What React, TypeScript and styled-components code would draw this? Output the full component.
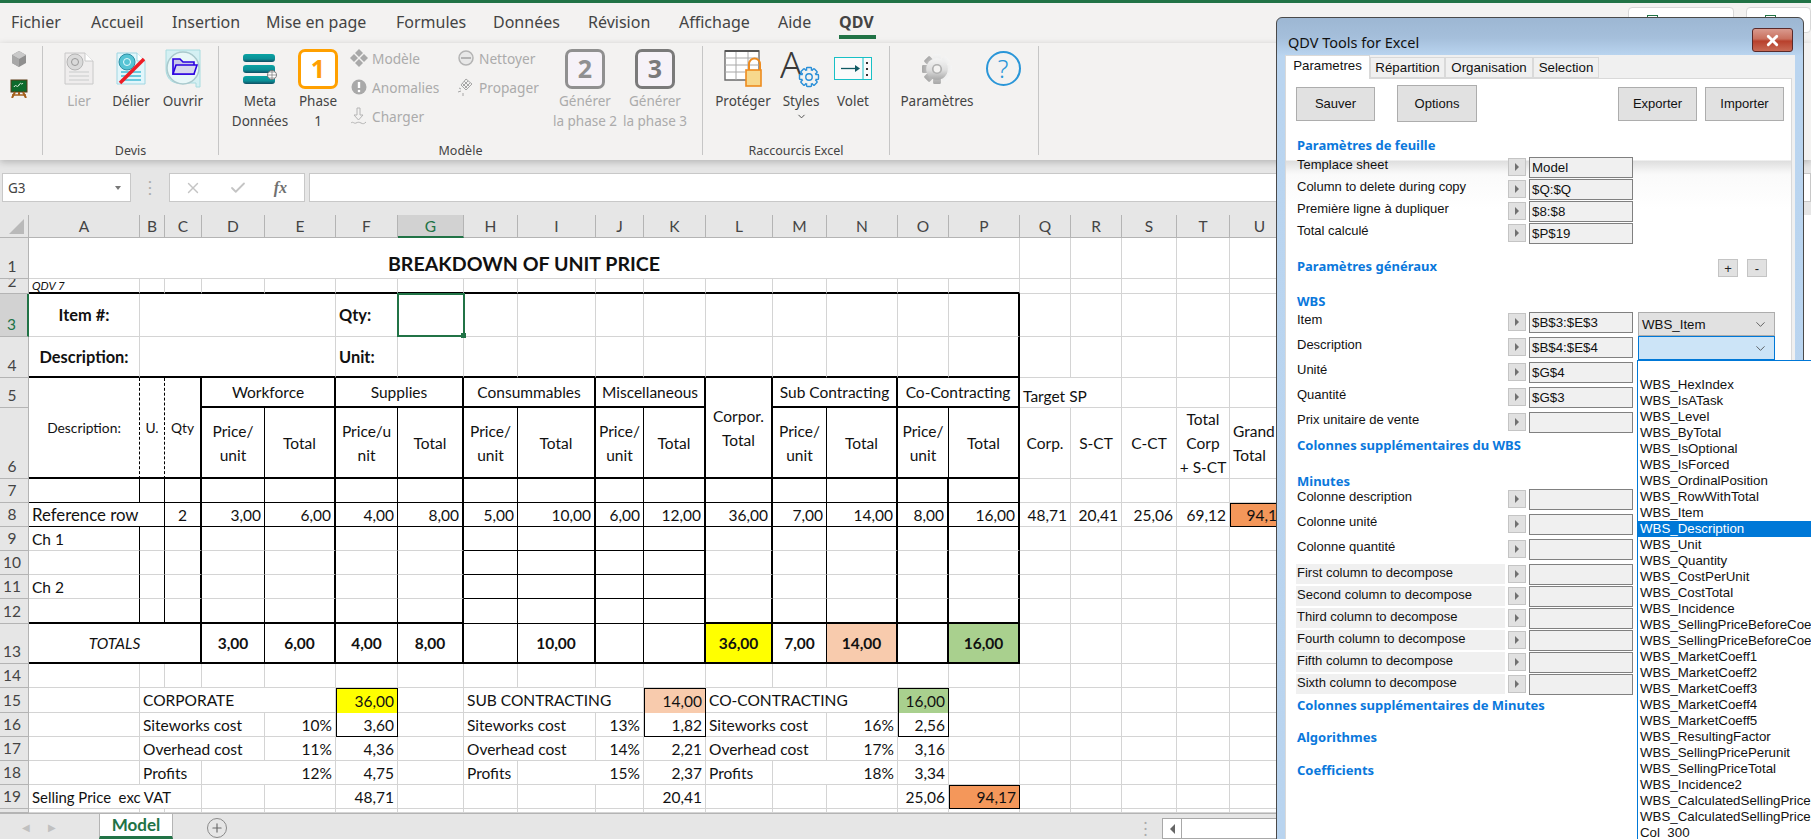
import React from "react";
import styled, { createGlobalStyle } from "styled-components";
import { Check, ChevronDown, Plus, X } from "lucide-react";

const UI_FONT = `"Noto Sans", "Open Sans", sans-serif`;
const CELL_FONT = `Lato, "Open Sans", sans-serif`;
const FORM_FONT = `"Liberation Sans", Arial, sans-serif`;

const GlobalStyle = createGlobalStyle`
  html, body { margin: 0; padding: 0; background: #fff; overflow: hidden; }
  * { box-sizing: border-box; }
`;

/* ---------- sheet data ---------- */
type Line = "g" | "n" | "T" | "d" | "x";
type CellDef = {
  c: number;
  r: number;
  cs?: number;
  rs?: number;
  text?: string;
  align?: "left" | "center" | "right";
  bold?: boolean;
  italic?: boolean;
  size?: number;
  bg?: string;
  right?: Line;
  bottom?: Line;
  left?: Line;
  top?: Line;
  drop?: number;
};

const COLUMNS: [string, number][] = [
  ["A", 111], ["B", 25], ["C", 37], ["D", 63], ["E", 71], ["F", 62], ["G", 66],
  ["H", 54], ["I", 78], ["J", 48], ["K", 62], ["L", 67], ["M", 54], ["N", 71],
  ["O", 51], ["P", 71], ["Q", 51], ["R", 51], ["S", 55], ["T", 53], ["U", 60],
];
const ROWS = [41, 15, 43, 41, 30, 71, 24, 24, 24, 24, 24, 25, 40, 24, 25, 24, 24, 24, 24, 4];

const YELLOW = "#ffff00";
const PEACH = "#f8cbad";
const GREEN = "#a9d08e";
const ORANGE = "#f4975a";

const colRight: Line[] = ["n", "n", "T", "n", "T", "n", "T", "n", "T", "n", "T", "T", "n", "T", "T", "T"];

const cells: CellDef[] = [
  { c: 1, r: 1, cs: 16, text: "BREAKDOWN OF UNIT PRICE", align: "center", bold: true, size: 19.6, drop: 11 },
  { c: 1, r: 2, text: "QDV 7", italic: true, size: 11.5, bottom: "T" },
  ...Array.from({ length: 15 }, (_, i): CellDef => ({ c: i + 2, r: 2, bottom: "T" })),

  { c: 1, r: 3, text: "Item #:", align: "center", bold: true, size: 16.4 },
  { c: 2, r: 3, cs: 4 },
  { c: 6, r: 3, text: "Qty:", bold: true, size: 16.4 },
  { c: 16, r: 3, right: "T" },
  { c: 1, r: 4, text: "Description:", align: "center", bold: true, size: 16.4, bottom: "T" },
  { c: 2, r: 4, cs: 4, bottom: "T" },
  { c: 6, r: 4, text: "Unit:", bold: true, size: 16.4, bottom: "T" },
  ...Array.from({ length: 9 }, (_, i): CellDef => ({ c: i + 7, r: 4, bottom: "T" })),
  { c: 16, r: 4, right: "T", bottom: "T" },

  { c: 1, r: 5, rs: 2, text: "Description:", align: "center", size: 13.8, right: "d", bottom: "T" },
  { c: 2, r: 5, rs: 2, text: "U.", align: "center", size: 13.8, right: "d", bottom: "T" },
  { c: 3, r: 5, rs: 2, text: "Qty", align: "center", size: 13.8, right: "T", bottom: "T" },
  { c: 4, r: 5, cs: 2, text: "Workforce", align: "center", right: "T", bottom: "T" },
  { c: 6, r: 5, cs: 2, text: "Supplies", align: "center", right: "T", bottom: "T" },
  { c: 8, r: 5, cs: 2, text: "Consummables", align: "center", right: "T", bottom: "T" },
  { c: 10, r: 5, cs: 2, text: "Miscellaneous", align: "center", right: "T", bottom: "T" },
  { c: 12, r: 5, rs: 2, text: "Corpor.\nTotal", align: "center", right: "T", bottom: "T" },
  { c: 13, r: 5, cs: 2, text: "Sub Contracting", align: "center", right: "T", bottom: "T" },
  { c: 15, r: 5, cs: 2, text: "Co-Contracting", align: "center", right: "T", bottom: "T" },
  { c: 17, r: 5, cs: 2, text: "Target SP", drop: 6 },

  { c: 4, r: 6, text: "Price/\nunit", align: "center", right: "n", bottom: "T" },
  { c: 5, r: 6, text: "Total", align: "center", right: "T", bottom: "T" },
  { c: 6, r: 6, text: "Price/u\nnit", align: "center", right: "n", bottom: "T" },
  { c: 7, r: 6, text: "Total", align: "center", right: "T", bottom: "T" },
  { c: 8, r: 6, text: "Price/\nunit", align: "center", right: "n", bottom: "T" },
  { c: 9, r: 6, text: "Total", align: "center", right: "T", bottom: "T" },
  { c: 10, r: 6, text: "Price/\nunit", align: "center", right: "n", bottom: "T" },
  { c: 11, r: 6, text: "Total", align: "center", right: "T", bottom: "T" },
  { c: 13, r: 6, text: "Price/\nunit", align: "center", right: "n", bottom: "T" },
  { c: 14, r: 6, text: "Total", align: "center", right: "T", bottom: "T" },
  { c: 15, r: 6, text: "Price/\nunit", align: "center", right: "n", bottom: "T" },
  { c: 16, r: 6, text: "Total", align: "center", right: "T", bottom: "T" },
  { c: 17, r: 6, text: "Corp.", align: "center" },
  { c: 18, r: 6, text: "S-CT", align: "center" },
  { c: 19, r: 6, text: "C-CT", align: "center" },
  { c: 20, r: 6, text: "Total\nCorp\n+ S-CT", align: "center" },
  { c: 21, r: 6, text: "Grand\nTotal" },

  ...colRight.map((right, i): CellDef => ({ c: i + 1, r: 7, right, bottom: "n" })),

  { c: 1, r: 8, cs: 2, text: "Reference row", size: 16.8, right: "n", bottom: "n" },
  { c: 3, r: 8, text: "2", align: "center", right: "T", bottom: "n" },
  ...["3,00", "6,00", "4,00", "8,00", "5,00", "10,00", "6,00", "12,00", "36,00", "7,00", "14,00", "8,00", "16,00"].map(
    (text, i): CellDef => ({ c: i + 4, r: 8, text, align: "right", right: colRight[i + 3], bottom: "n" })
  ),
  { c: 17, r: 8, text: "48,71", align: "right" },
  { c: 18, r: 8, text: "20,41", align: "right" },
  { c: 19, r: 8, text: "25,06", align: "right" },
  { c: 20, r: 8, text: "69,12", align: "right" },
  { c: 21, r: 8, text: "94,17", align: "right", bg: ORANGE, top: "n", left: "n", right: "n", bottom: "n" },

  ...[9, 10, 11, 12].flatMap((r) =>
    colRight.map((right, i): CellDef => ({
      c: i + 1,
      r,
      right,
      text: i === 0 && r === 9 ? "Ch 1" : i === 0 && r === 11 ? "Ch 2" : undefined,
      bottom: i >= 7 && i <= 10 ? "n" : r === 12 ? "T" : "g",
    }))
  ),

  { c: 1, r: 13, cs: 3, text: "TOTALS", align: "center", italic: true, right: "T", bottom: "T" },
  ...[
    ["3,00"], ["6,00"], ["4,00"], ["8,00"], [""], ["10,00"], [""], [""],
    ["36,00", YELLOW], ["7,00"], ["14,00", PEACH], [""], ["16,00", GREEN],
  ].map(([text, bg], i): CellDef => ({
    c: i + 4, r: 13, text, bg, bold: true, align: "center", right: colRight[i + 3], bottom: "T",
  })),

  { c: 2, r: 15, cs: 4, text: "CORPORATE" },
  { c: 6, r: 15, text: "36,00", align: "right", bg: YELLOW, top: "n", left: "n", right: "n", bottom: "x" },
  { c: 8, r: 15, cs: 3, text: "SUB CONTRACTING" },
  { c: 11, r: 15, text: "14,00", align: "right", bg: PEACH, top: "n", left: "n", right: "n", bottom: "x" },
  { c: 12, r: 15, cs: 3, text: "CO-CONTRACTING" },
  { c: 15, r: 15, text: "16,00", align: "right", bg: GREEN, top: "n", left: "n", right: "n", bottom: "x" },

  { c: 2, r: 16, cs: 3, text: "Siteworks cost" },
  { c: 5, r: 16, text: "10%", align: "right" },
  { c: 6, r: 16, text: "3,60", align: "right", left: "n", right: "n", bottom: "n" },
  { c: 8, r: 16, cs: 2, text: "Siteworks cost" },
  { c: 10, r: 16, text: "13%", align: "right" },
  { c: 11, r: 16, text: "1,82", align: "right", left: "n", right: "n", bottom: "n" },
  { c: 12, r: 16, cs: 2, text: "Siteworks cost" },
  { c: 14, r: 16, text: "16%", align: "right" },
  { c: 15, r: 16, text: "2,56", align: "right", left: "n", right: "n", bottom: "n" },

  { c: 2, r: 17, cs: 3, text: "Overhead cost" },
  { c: 5, r: 17, text: "11%", align: "right" },
  { c: 6, r: 17, text: "4,36", align: "right" },
  { c: 8, r: 17, cs: 2, text: "Overhead cost" },
  { c: 10, r: 17, text: "14%", align: "right" },
  { c: 11, r: 17, text: "2,21", align: "right" },
  { c: 12, r: 17, cs: 2, text: "Overhead cost" },
  { c: 14, r: 17, text: "17%", align: "right" },
  { c: 15, r: 17, text: "3,16", align: "right" },

  { c: 2, r: 18, cs: 2, text: "Profits" },
  { c: 4, r: 18, cs: 2, text: "12%", align: "right" },
  { c: 6, r: 18, text: "4,75", align: "right" },
  { c: 8, r: 18, text: "Profits" },
  { c: 9, r: 18, cs: 2, text: "15%", align: "right" },
  { c: 11, r: 18, text: "2,37", align: "right" },
  { c: 12, r: 18, text: "Profits" },
  { c: 13, r: 18, cs: 2, text: "18%", align: "right" },
  { c: 15, r: 18, text: "3,34", align: "right" },

  { c: 1, r: 19, cs: 3, text: "Selling Price  exc VAT", size: 14.9 },
  { c: 6, r: 19, text: "48,71", align: "right" },
  { c: 11, r: 19, text: "20,41", align: "right" },
  { c: 15, r: 19, text: "25,06", align: "right" },
  { c: 16, r: 19, text: "94,17", align: "right", bg: ORANGE, top: "n", left: "n", right: "n", bottom: "n" },
];

const taken = new Set<string>();
cells.forEach((d) => {
  for (let y = 0; y < (d.rs ?? 1); y++)
    for (let x = 0; x < (d.cs ?? 1); x++) taken.add(`${d.c + x}:${d.r + y}`);
});
const blanks: CellDef[] = [];
ROWS.forEach((_, y) =>
  COLUMNS.forEach((__, x) => {
    if (!taken.has(`${x + 1}:${y + 1}`)) blanks.push({ c: x + 1, r: y + 1 });
  })
);

const lineCss = (k?: Line) => {
  if (k === "T") return "2px solid #000";
  if (k === "n") return "1px solid #000";
  if (k === "d") return "1px dashed #000";
  if (k === "x") return "0 none";
  return "1px solid #d4d4d4";
};

/* ---------- page ---------- */
const Page = styled.div`
  position: relative;
  width: 1811px;
  height: 839px;
  overflow: hidden;
  display: flex;
  flex-direction: column;
  background: #e6e6e6;
`;

const TopStripe = styled.div`
  height: 3px;
  flex: none;
  background: #217346;
`;

const TabRow = styled.div`
  height: 40px;
  flex: none;
  display: flex;
  padding-left: 11px;
  background: #f3f2f1;
  font-family: ${UI_FONT};
`;

const MenuTab = styled.div<{ $w: number; $active?: boolean }>`
  position: relative;
  flex: 0 0 ${(p) => p.$w}px;
  padding-top: 6px;
  height: 36px;
  font-size: 16px;
  line-height: 26px;
  font-weight: ${(p) => (p.$active ? 700 : 400)};
  color: #444;
  ${(p) =>
    p.$active &&
    `&::after { content: ""; position: absolute; left: 0; width: 37px; top: 32px; height: 4px; background: #217346; }`}
`;

const ShareGroup = styled.div`
  margin-left: auto;
  display: flex;
  gap: 12px;
`;

const ShareBox = styled.div<{ $w: number }>`
  width: ${(p) => p.$w}px;
  height: 26px;
  margin-top: 4px;
  padding: 7px 0 0 18px;
  background: #fff;
  border: 1px solid #d8d8d8;
  border-radius: 4px;
`;

const ShareMark = styled.div`
  width: 11px;
  height: 11px;
  border: 1px solid #217346;
`;

const Ribbon = styled.div`
  position: relative;
  z-index: 2;
  height: 117px;
  flex: none;
  display: flex;
  padding: 3px 0 5px;
  background: #f3f2f1;
  box-shadow: 0 2px 7px rgba(0, 0, 0, 0.22);
  font-family: ${UI_FONT};
`;

const Group = styled.div<{ $w: number }>`
  width: ${(p) => p.$w}px;
  flex: none;
  display: flex;
  flex-direction: column;
  border-right: 1px solid #c6c6c6;
`;

const GroupBody = styled.div<{ $pad?: number }>`
  flex: 1;
  display: flex;
  padding-left: ${(p) => p.$pad ?? 0}px;
`;

const GroupLabel = styled.div`
  height: 12px;
  text-align: center;
  font-size: 12.5px;
  line-height: 16px;
  color: #444;
`;

const QuickColumn = styled.div`
  display: flex;
  flex-direction: column;
  gap: 11px;
  padding: 4px 0 0 10px;
`;

const LargeButton = styled.div<{ $w: number; $off?: boolean }>`
  width: ${(p) => p.$w}px;
  flex: none;
  display: flex;
  flex-direction: column;
  align-items: center;
  text-align: center;
  font-size: 13.5px;
  line-height: 20px;
  white-space: pre-line;
  color: ${(p) => (p.$off ? "#ababab" : "#444")};
`;

const IconSlot = styled.div`
  height: 45px;
  display: flex;
  align-items: center;
  justify-content: center;
`;

const PhaseBox = styled.div<{ $c: string; $bg: string }>`
  width: 40px;
  height: 40px;
  border: 3px solid ${(p) => p.$c};
  border-radius: 7px;
  background: ${(p) => p.$bg};
  color: ${(p) => p.$c};
  font-size: 25px;
  font-weight: 700;
  line-height: 33px;
  text-align: center;
`;

const SmallColumn = styled.div<{ $w: number; $pad?: number }>`
  width: ${(p) => p.$w}px;
  flex: none;
  display: flex;
  flex-direction: column;
  gap: 9px;
  padding: 2px 0 0 ${(p) => p.$pad ?? 0}px;
`;

const SmallButton = styled.div`
  height: 20px;
  display: flex;
  align-items: center;
  gap: 4px;
  font-size: 13.7px;
  color: #ababab;
  white-space: nowrap;
`;

const HelpCircle = styled.div`
  width: 35px;
  height: 35px;
  border: 2px solid #2a96d8;
  border-radius: 50%;
  color: #2a96d8;
  font-size: 25px;
  line-height: 30px;
  text-align: center;
  font-weight: 300;
`;

const FormulaBar = styled.div`
  height: 55px;
  flex: none;
  display: flex;
  align-items: flex-start;
  padding: 13px 0 0 2px;
  background: #e6e6e6;
  font-family: ${UI_FONT};
`;

const NameBox = styled.div`
  width: 129px;
  height: 29px;
  display: flex;
  align-items: center;
  justify-content: space-between;
  padding: 0 9px 0 5px;
  background: #fff;
  border: 1px solid #c8c8c8;
  font-size: 13.5px;
  color: #444;
`;

const Caret = styled.div`
  width: 0;
  height: 0;
  border-left: 3.5px solid transparent;
  border-right: 3.5px solid transparent;
  border-top: 4px solid #777;
`;

const GripDots = styled.div`
  width: 38px;
  height: 29px;
  display: flex;
  align-items: center;
  justify-content: center;
  color: #aaa;
  font-size: 12px;
  font-weight: 700;
  line-height: 6px;
  text-align: center;
  white-space: pre-line;
`;

const FunctionBox = styled.div`
  width: 136px;
  height: 29px;
  display: flex;
  align-items: center;
  justify-content: space-between;
  padding: 0 17px 0 14px;
  background: #fff;
  border: 1px solid #c8c8c8;
  color: #c4c4c4;
`;

const FxMark = styled.span`
  font-family: "Liberation Serif", serif;
  font-style: italic;
  font-weight: 700;
  font-size: 16px;
  color: #707070;
`;

const FormulaInput = styled.div`
  flex: 1;
  height: 29px;
  margin-left: 4px;
  background: #fff;
  border: 1px solid #c8c8c8;
`;

const Sheet = styled.div`
  flex: none;
  height: 598px;
  display: grid;
  grid-template-columns: 29px ${COLUMNS.map(([, w]) => `${w}px`).join(" ")};
  grid-template-rows: 23px ${ROWS.map((h) => `${h}px`).join(" ")};
  background: #fff;
  font-family: ${CELL_FONT};
  font-size: 15.5px;
  color: #111;
  overflow: hidden;
`;

const Corner = styled.div`
  position: relative;
  background: #e6e6e6;
  border-right: 1px solid #b4b4b4;
  border-bottom: 1px solid #b4b4b4;
  &::after {
    content: "";
    position: absolute;
    right: 4px;
    bottom: 3px;
    border-left: 15px solid transparent;
    border-bottom: 15px solid #b9b9b9;
  }
`;

const ColHead = styled.div<{ $on?: boolean }>`
  display: flex;
  align-items: center;
  justify-content: center;
  background: ${(p) => (p.$on ? "#d2d2d2" : "#e6e6e6")};
  border-right: 1px solid #b4b4b4;
  border-bottom: ${(p) => (p.$on ? "2px solid #217346" : "1px solid #b4b4b4")};
  color: ${(p) => (p.$on ? "#217346" : "#444")};
`;

const RowHead = styled.div<{ $r: number; $on?: boolean }>`
  grid-column: 1;
  grid-row: ${(p) => p.$r + 1};
  display: flex;
  align-items: flex-end;
  justify-content: center;
  padding: 0 4px 2px 0;
  overflow: hidden;
  line-height: 20px;
  background: ${(p) => (p.$on ? "#d2d2d2" : "#e6e6e6")};
  border-right: ${(p) => (p.$on ? "2px solid #217346" : "1px solid #b4b4b4")};
  border-bottom: 1px solid #b4b4b4;
  color: ${(p) => (p.$on ? "#217346" : "#444")};
`;

const Cell = styled.div<{
  $c: number;
  $r: number;
  $cs: number;
  $rs: number;
  $align: string;
  $bold?: boolean;
  $italic?: boolean;
  $size?: number;
  $bg?: string;
  $right?: Line;
  $bottom?: Line;
  $left?: Line;
  $top?: Line;
  $drop?: number;
}>`
  grid-column: ${(p) => p.$c + 1} / span ${(p) => p.$cs};
  grid-row: ${(p) => p.$r + 1} / span ${(p) => p.$rs};
  min-width: 0;
  min-height: 0;
  display: flex;
  align-items: center;
  justify-content: ${(p) =>
    p.$align === "center" ? "center" : p.$align === "right" ? "flex-end" : "flex-start"};
  padding: ${(p) => p.$drop ?? 0}px 3px 0;
  overflow: hidden;
  white-space: pre;
  text-align: ${(p) => p.$align};
  line-height: 24px;
  font-weight: ${(p) => (p.$bold ? 700 : 400)};
  font-style: ${(p) => (p.$italic ? "italic" : "normal")};
  font-size: ${(p) => p.$size ?? 15.5}px;
  background: ${(p) => p.$bg ?? "transparent"};
  border-right: ${(p) => lineCss(p.$right)};
  border-bottom: ${(p) => lineCss(p.$bottom)};
  ${(p) => p.$left && `border-left: ${lineCss(p.$left)};`}
  ${(p) => p.$top && `border-top: ${lineCss(p.$top)};`}
`;

const ActiveCell = styled.div`
  grid-column: 8;
  grid-row: 4;
  position: relative;
  margin: -1px -1px 0 -1px;
  border: 2px solid #217346;
  z-index: 1;
  &::after {
    content: "";
    position: absolute;
    right: -3px;
    bottom: -3px;
    width: 5px;
    height: 5px;
    background: #217346;
  }
`;

const SheetBar = styled.div`
  flex: 1;
  display: flex;
  align-items: stretch;
  background: #e6e6e6;
  border-top: 1px solid #b4b4b4;
  font-family: ${CELL_FONT};
`;

const NavArrows = styled.div`
  width: 99px;
  display: flex;
  gap: 18px;
  align-items: center;
  padding: 0 0 0 22px;
  color: #c0c0c0;
  font-size: 10px;
`;

const SheetTab = styled.div`
  width: 74px;
  background: #fff;
  border: 1px solid #b4b4b4;
  border-top: 0;
  border-bottom: 3px solid #217346;
  color: #217346;
  font-weight: 700;
  font-size: 17px;
  line-height: 22px;
  text-align: center;
`;

const AddSheet = styled.div`
  width: 20px;
  height: 20px;
  margin: 4px 0 0 34px;
  display: flex;
  align-items: center;
  justify-content: center;
  border: 1.5px solid #8a8a8a;
  border-radius: 50%;
  color: #6a6a6a;
`;

const ScrollGrip = styled.div`
  margin: 5px 0 0 auto;
  width: 4px;
  color: #aaa;
  font-size: 11px;
  font-weight: 700;
  line-height: 6px;
  white-space: pre-line;
`;

const ScrollTrack = styled.div`
  width: 649px;
  height: 21px;
  margin: 4px 0 0 14px;
  display: flex;
  background: #fff;
  border: 1px solid #a8a8a8;
`;

const ScrollArrow = styled.div`
  width: 19px;
  border-right: 1px solid #a8a8a8;
  display: flex;
  align-items: center;
  justify-content: center;
  &::before {
    content: "";
    border-top: 5px solid transparent;
    border-bottom: 5px solid transparent;
    border-right: 5px solid #666;
  }
`;

/* ---------- dialog ---------- */
const Dialog = styled.div`
  position: absolute;
  z-index: 5;
  left: 1276px;
  top: 17px;
  width: 528px;
  height: 840px;
  display: flex;
  flex-direction: column;
  padding: 0 8px 0 8px;
  border: 1px solid #4a4a4a;
  border-radius: 6px 6px 0 0;
  background: linear-gradient(#9db7d3 0, #a5bfdb 20px, #bad5f0 38px, #b9d4ef 100%);
  font-family: ${FORM_FONT};
  color: #111;
`;

const TitleBar = styled.div`
  height: 37px;
  flex: none;
  display: flex;
  align-items: flex-start;
  justify-content: space-between;
  padding: 14px 2px 0 3px;
  font-family: ${UI_FONT};
  font-size: 14.5px;
  line-height: 20px;
`;

const CloseButton = styled.div`
  width: 41px;
  height: 24px;
  margin-top: -4px;
  display: flex;
  align-items: center;
  justify-content: center;
  border: 1px solid #5a2a2a;
  border-radius: 3px;
  background: linear-gradient(#d99a8e 0, #c9705e 45%, #b8402c 55%, #c86a55 100%);
  color: #fff;
`;

const ClientArea = styled.div`
  flex: 1;
  display: flex;
  flex-direction: column;
  background: #f0f0f0;
  padding-right: 3px;
`;

const TabStrip = styled.div`
  height: 23px;
  flex: none;
  display: flex;
  align-items: flex-end;
  font-size: 13.3px;
`;

const DialogTab = styled.div<{ $w: number; $active?: boolean }>`
  position: relative;
  width: ${(p) => p.$w}px;
  height: ${(p) => (p.$active ? 24 : 21)}px;
  margin-bottom: ${(p) => (p.$active ? -1 : 0)}px;
  z-index: ${(p) => (p.$active ? 1 : 0)};
  background: ${(p) => (p.$active ? "#fff" : "#f0f0f0")};
  border: 1px solid #d9d9d9;
  border-bottom: ${(p) => (p.$active ? "0" : "1px solid #d9d9d9")};
  line-height: 20px;
  text-align: center;
`;

const TabBody = styled.div`
  flex: 1;
  display: flex;
  flex-direction: column;
  padding: 6px 0 0 10px;
  border: 1px solid #d9d9d9;
  background: linear-gradient(
    #fff 0,
    #fff 81px,
    #dedede 82px,
    #f4f4f4 92px,
    #fafafa 96px,
    #fff 130px
  );
  font-size: 13px;
`;

const ButtonBar = styled.div`
  height: 37px;
  flex: none;
  display: flex;
  align-items: center;
  padding-right: 7px;
`;

const DialogButton = styled.div<{ $w: number; $h: number; $gap?: number; $push?: boolean }>`
  width: ${(p) => p.$w}px;
  height: ${(p) => p.$h}px;
  margin-left: ${(p) => (p.$push ? "auto" : `${p.$gap ?? 0}px`)};
  display: flex;
  align-items: center;
  justify-content: center;
  background: #e1e1e1;
  border: 1px solid #adadad;
`;

const Section = styled.div<{ $mt: number }>`
  position: relative;
  height: 18px;
  flex: none;
  margin-top: ${(p) => p.$mt}px;
  display: flex;
  align-items: center;
  padding-left: 1px;
  font-family: ${UI_FONT};
  font-size: 13px;
  font-weight: 700;
  color: #0a78dc;
  white-space: nowrap;
`;

const MiniButton = styled.div<{ $left: number }>`
  position: absolute;
  left: ${(p) => p.$left}px;
  top: 2px;
  width: 20px;
  height: 18px;
  display: flex;
  align-items: center;
  justify-content: center;
  background: #e1e1e1;
  border: 1px solid #c4c4c4;
  color: #222;
  font-family: ${FORM_FONT};
  font-size: 13px;
  font-weight: 400;
`;

const Fields = styled.div<{ $mt: number; $gap: number }>`
  flex: none;
  margin-top: ${(p) => p.$mt}px;
  display: flex;
  flex-direction: column;
  gap: ${(p) => p.$gap}px;
`;

const FieldRow = styled.div`
  height: 21px;
  display: flex;
  align-items: flex-start;
`;

const FieldLabel = styled.div<{ $shaded?: boolean }>`
  width: 209px;
  height: 20px;
  margin-right: 3px;
  padding-left: 1px;
  line-height: ${(p) => (p.$shaded ? 17 : 16)}px;
  white-space: nowrap;
  background: ${(p) => (p.$shaded ? "#f0f0f0" : "transparent")};
`;

const ArrowButton = styled.div`
  width: 18px;
  height: 18px;
  margin: 1px 3px 0 0;
  flex: none;
  display: flex;
  align-items: center;
  justify-content: center;
  background: #e1e1e1;
  border: 1px solid #c4c4c4;
  &::before {
    content: "";
    border-top: 4px solid transparent;
    border-bottom: 4px solid transparent;
    border-left: 4px solid #707070;
  }
`;

const FieldValue = styled.div`
  width: 104px;
  height: 21px;
  flex: none;
  padding-left: 2px;
  border: 1px solid #808080;
  background: #f0f0f0;
  line-height: 20px;
  font-size: 13.3px;
`;

const SelectBox = styled.div<{ $focus?: boolean }>`
  width: 137px;
  height: 24px;
  margin-left: 5px;
  flex: none;
  display: flex;
  align-items: center;
  justify-content: space-between;
  padding: 0 6px 0 3px;
  background: ${(p) => (p.$focus ? "#cce4f7" : "#e1e1e1")};
  border: 1px solid ${(p) => (p.$focus ? "#0078d7" : "#adadad")};
  font-size: 13.3px;
  ${(p) => p.$focus && "margin-top: -1px;"}
`;

const Dropdown = styled.div`
  position: absolute;
  z-index: 6;
  left: 360px;
  top: 342px;
  width: 175px;
  height: 500px;
  overflow: hidden;
  background: #fff;
  border: 1px solid #0078d7;
  border-right: 0;
  font-size: 13.3px;
`;

const DropItem = styled.div<{ $on?: boolean }>`
  height: 16px;
  padding-left: 2px;
  line-height: 16px;
  white-space: nowrap;
  background: ${(p) => (p.$on ? "#0078d7" : "transparent")};
  color: ${(p) => (p.$on ? "#fff" : "#111")};
`;

/* ---------- icons ---------- */
const CubeIcon = () => (
  <svg width="18" height="18" viewBox="0 0 18 18">
    <path d="M9 1l7 4v8l-7 4-7-4V5z" fill="#8f8f8f" />
    <path d="M9 1l7 4-7 4-7-4z" fill="#c9c9c9" />
    <path d="M9 9v8l-7-4V5z" fill="#a8a8a8" />
  </svg>
);

const EaselIcon = () => (
  <svg width="18" height="19" viewBox="0 0 18 19">
    <rect x="1" y="1" width="16" height="12" fill="#0d6b2c" stroke="#5b3a16" />
    <path d="M4 8c2-4 3 2 5-2s2 1 4-2" stroke="#e8f5e8" fill="none" strokeWidth="1" />
    <path d="M5 13l-3 6M13 13l3 6M9 13v3" stroke="#a5601c" strokeWidth="2" />
    <path d="M2 16h14" stroke="#a5601c" strokeWidth="1.5" />
  </svg>
);

const DocIcon = ({ faded, strike }: { faded?: boolean; strike?: boolean }) => (
  <svg width="32" height="33" viewBox="0 0 32 33">
    <path d="M2 1h20l8 8v23H2z" fill={faded ? "#efeded" : "#e2f6fb"} stroke={faded ? "#c8c8c8" : "#9fd6e2"} />
    <path d="M22 1v8h8" fill="#fff" stroke={faded ? "#c8c8c8" : "#9fd6e2"} />
    <circle cx="12" cy="10" r="8" fill={faded ? "#dadada" : "#56c4d4"} stroke={faded ? "#b5b5b5" : "#2f8fa5"} />
    <circle cx="12" cy="10" r="3.5" fill="none" stroke={faded ? "#999" : "#e6fbff"} />
    {[20, 24, 28].map((y) => (
      <path key={y} d={`M6 ${y}h20`} stroke={faded ? "#d6d6d6" : "#45bcd6"} strokeWidth="1.5" />
    ))}
    {strike && <path d="M29 7L5 31" stroke="#ee1c25" strokeWidth="3.5" />}
  </svg>
);

const OpenIcon = () => (
  <svg width="38" height="39" viewBox="0 0 38 39">
    <path d="M2 1h34v37H32V34H14C7 34 2 28 2 20z" fill="#d4f0f3" stroke="#a8dce0" />
    <circle cx="19" cy="19" r="16" fill="#e8f7f8" stroke="#a9c9cd" strokeWidth="1.5" />
    <path d="M9 25V10h7l3 3h11v12z" fill="#c8c8e8" stroke="#2a00e0" strokeWidth="1.6" />
    <path d="M9 25l3-9h21l-3 9z" fill="#d8d8ee" stroke="#2a00e0" strokeWidth="1.6" />
  </svg>
);

const StackIcon = () => (
  <svg width="34" height="30" viewBox="0 0 34 30">
    <defs>
      <linearGradient id="teal" x1="0" y1="0" x2="0" y2="1">
        <stop offset="0" stopColor="#0aa3a3" />
        <stop offset="0.6" stopColor="#0a8f96" />
        <stop offset="1" stopColor="#0f4e63" />
      </linearGradient>
    </defs>
    {[0, 11, 22].map((y) => (
      <rect key={y} x="0" y={y} width="32" height="8" rx="3" fill="url(#teal)" />
    ))}
    <circle cx="29" cy="21" r="4.5" fill="#fff" stroke="#666" strokeWidth="0.8" />
    <path d="M24.5 21h9M29 16.5v9M26 18h6M26 24h6" stroke="#666" strokeWidth="0.6" />
  </svg>
);

const DiamondsIcon = () => (
  <svg width="18" height="18" viewBox="0 0 18 18" fill="#a9a9a9">
    <path d="M9 0l4 4-4 4-4-4zM4 5l4 4-4 4-4-4zM14 5l4 4-4 4-4-4zM9 10l4 4-4 4-4-4z" />
  </svg>
);

const AlertIcon = () => (
  <svg width="18" height="18" viewBox="0 0 18 18">
    <circle cx="9" cy="9" r="7.5" fill="#a9a9a9" />
    <path d="M9 4v6" stroke="#fff" strokeWidth="2.4" />
    <circle cx="9" cy="13" r="1.3" fill="#fff" />
  </svg>
);

const LoadIcon = () => (
  <svg width="18" height="18" viewBox="0 0 18 18" fill="none" stroke="#b4b4b4">
    <path d="M7 1h3v7h3l-4.500 5-4.500-5h3z" />
    <path d="M1 16c2-2 3 1 5 0s3-1 5 0 3 1 5-1" />
  </svg>
);

const ClockIcon = () => (
  <svg width="18" height="18" viewBox="0 0 18 18">
    <circle cx="9" cy="9" r="7" fill="#e8e8e8" stroke="#b4b4b4" strokeWidth="1.5" />
    <path d="M4 8h10v2H4z" fill="#b4b4b4" />
  </svg>
);

const SpreadIcon = () => (
  <svg width="18" height="20" viewBox="0 0 18 20" stroke="#a6a6a6" fill="none">
    <path d="M9 2l6 5-6 6-5-5zM7 4l6 6M5 6l6 6M11 4L6 9M13 6l-5 5" />
    <path d="M2 11l2 1M1 15l3-1M6 16v3" />
  </svg>
);

const ProtectIcon = () => (
  <svg width="38" height="37" viewBox="0 0 38 37">
    <path d="M1 1h34v24L28 30H1z" fill="#fff" stroke="#6b6b6b" strokeWidth="1.4" />
    <path d="M1 8h34M1 15h34M1 22h20M12 1v29M24 1v18" stroke="#a8a8a8" />
    <path d="M1 1h34" stroke="#555" strokeWidth="2" />
    <path d="M26 20v-6a5.500 5.500 0 0 1 11 0v6" transform="translate(-1 0)" fill="none" stroke="#ed8b1f" strokeWidth="2" />
    <rect x="22" y="20" width="15" height="16" fill="#f7d88c" stroke="#ed8b1f" strokeWidth="1.6" />
  </svg>
);

const GearPath = ({ cx, cy, r, fill, stroke, sw, hole }: { cx: number; cy: number; r: number; fill: string; stroke?: string; sw?: number; hole?: string }) => (
  <g>
    {[0, 45, 90, 135].map((a) => (
      <rect
        key={a}
        x={cx - r * 0.26}
        y={cy - r}
        width={r * 0.52}
        height={r * 2}
        rx={r * 0.08}
        fill={fill}
        stroke={stroke}
        strokeWidth={sw}
        transform={`rotate(${a} ${cx} ${cy})`}
      />
    ))}
    <circle cx={cx} cy={cy} r={r * 0.72} fill={fill} />
    <circle cx={cx} cy={cy} r={r * 0.34} fill={hole ?? "#f3f2f1"} stroke={stroke} strokeWidth={sw} />
  </g>
);

const StylesIcon = () => (
  <svg width="42" height="40" viewBox="0 0 42 40">
    <text x="0" y="29" fontFamily='"Noto Sans", sans-serif' fontSize="37" fontWeight="300" fill="#3a3a3a">
      A
    </text>
    <circle cx="29" cy="28" r="8" fill="#f3f2f1" />
    <GearPath cx={29} cy={28} r={9.500} fill="#f3f2f1" stroke="#2a8fd8" sw={1.4} />
  </svg>
);

const PaneIcon = () => (
  <svg width="38" height="23" viewBox="0 0 38 23">
    <rect x="0.500" y="0.500" width="37" height="22" fill="#fbfbfb" stroke="#18c0c6" />
    <path d="M29 1v21" stroke="#18c0c6" />
    <path d="M7 11.500h17" stroke="#0f5a63" strokeWidth="1.300" />
    <path d="M21 8l5 3.500-5 3.500z" fill="#0f5a63" />
    {[5, 11, 17].map((y) => (
      <rect key={y} x="32" y={y} width="2" height="2" fill="#333" />
    ))}
  </svg>
);

const SettingsIcon = () => (
  <svg width="32" height="32" viewBox="0 0 32 32">
    <defs>
      <linearGradient id="silver" x1="0" y1="0" x2="0" y2="1">
        <stop offset="0" stopColor="#f4f4f4" />
        <stop offset="0.55" stopColor="#dedede" />
        <stop offset="1" stopColor="#a8a8a8" />
      </linearGradient>
    </defs>
    <GearPath cx={16} cy={16} r={15} fill="url(#silver)" hole="#b0b0b0" />
    <circle cx="16" cy="16" r="3.4" fill="#f3f2f1" />
  </svg>
);

/* ---------- lists ---------- */
const MENU: [string, number][] = [
  ["Fichier", 80], ["Accueil", 81], ["Insertion", 94], ["Mise en page", 130], ["Formules", 97],
  ["Données", 95], ["Révision", 91], ["Affichage", 99], ["Aide", 61],
];

const TOP_FIELDS = [
  ["Templace sheet", "Model"],
  ["Column to delete during copy", "$Q:$Q"],
  ["Première ligne à dupliquer", "$8:$8"],
  ["Total calculé", "$P$19"],
];
const WBS_FIELDS = [
  ["Item", "$B$3:$E$3"],
  ["Description", "$B$4:$E$4"],
  ["Unité", "$G$4"],
  ["Quantité", "$G$3"],
  ["Prix unitaire de vente", ""],
];
const MINUTE_FIELDS = ["Colonne description", "Colonne unité", "Colonne quantité"];
const DECOMPOSE = ["First", "Second", "Third", "Fourth", "Fifth", "Sixth"];
const WBS_COLUMNS = [
  "", "WBS_HexIndex", "WBS_IsATask", "WBS_Level", "WBS_ByTotal", "WBS_IsOptional", "WBS_IsForced",
  "WBS_OrdinalPosition", "WBS_RowWithTotal", "WBS_Item", "WBS_Description", "WBS_Unit", "WBS_Quantity",
  "WBS_CostPerUnit", "WBS_CostTotal", "WBS_Incidence", "WBS_SellingPriceBeforeCoef",
  "WBS_SellingPriceBeforeCoef2", "WBS_MarketCoeff1", "WBS_MarketCoeff2", "WBS_MarketCoeff3",
  "WBS_MarketCoeff4", "WBS_MarketCoeff5", "WBS_ResultingFactor", "WBS_SellingPricePerunit",
  "WBS_SellingPriceTotal", "WBS_Incidence2", "WBS_CalculatedSellingPrice", "WBS_CalculatedSellingPrice2",
  "Col_300",
];

const renderCell = (d: CellDef) => (
  <Cell
    key={`${d.c}:${d.r}`}
    $c={d.c}
    $r={d.r}
    $cs={d.cs ?? 1}
    $rs={d.rs ?? 1}
    $align={d.align ?? "left"}
    $bold={d.bold}
    $italic={d.italic}
    $size={d.size}
    $bg={d.bg}
    $right={d.right}
    $bottom={d.bottom}
    $left={d.left}
    $top={d.top}
    $drop={d.drop}
  >
    {d.text}
  </Cell>
);

const App: React.FC = () => {
  return (
    <Page>
      <GlobalStyle />
      <TopStripe />
      <TabRow>
        {MENU.map(([name, w]) => (
          <MenuTab key={name} $w={w}>
            {name}
          </MenuTab>
        ))}
        <MenuTab $w={40} $active>
          QDV
        </MenuTab>
        <ShareGroup>
          <ShareBox $w={106}>
            <ShareMark />
          </ShareBox>
          <ShareBox $w={65}>
            <ShareMark />
          </ShareBox>
        </ShareGroup>
      </TabRow>

      <Ribbon>
        <Group $w={43}>
          <QuickColumn>
            <CubeIcon />
            <EaselIcon />
          </QuickColumn>
        </Group>
        <Group $w={176}>
          <GroupBody $pad={10}>
            <LargeButton $w={52} $off>
              <IconSlot><DocIcon faded /></IconSlot>
              Lier
            </LargeButton>
            <LargeButton $w={52}>
              <IconSlot><DocIcon strike /></IconSlot>
              Délier
            </LargeButton>
            <LargeButton $w={52}>
              <IconSlot><OpenIcon /></IconSlot>
              Ouvrir
            </LargeButton>
          </GroupBody>
          <GroupLabel>Devis</GroupLabel>
        </Group>
        <Group $w={484}>
          <GroupBody $pad={8}>
            <LargeButton $w={66}>
              <IconSlot><StackIcon /></IconSlot>
              {"Meta\nDonnées"}
            </LargeButton>
            <LargeButton $w={50}>
              <IconSlot><PhaseBox $c="#ffa000" $bg="#fff">1</PhaseBox></IconSlot>
              {"Phase\n1"}
            </LargeButton>
            <SmallColumn $w={114} $pad={7}>
              <SmallButton><DiamondsIcon />Modèle</SmallButton>
              <SmallButton><AlertIcon />Anomalies</SmallButton>
              <SmallButton><LoadIcon />Charger</SmallButton>
            </SmallColumn>
            <SmallColumn $w={93}>
              <SmallButton><ClockIcon />Nettoyer</SmallButton>
              <SmallButton><SpreadIcon />Propager</SmallButton>
            </SmallColumn>
            <LargeButton $w={70} $off>
              <IconSlot><PhaseBox $c="#909090" $bg="#f6f2f8">2</PhaseBox></IconSlot>
              {"Générer\nla phase 2"}
            </LargeButton>
            <LargeButton $w={70} $off>
              <IconSlot><PhaseBox $c="#7a7a7a" $bg="#f6f2f8">3</PhaseBox></IconSlot>
              {"Générer\nla phase 3"}
            </LargeButton>
          </GroupBody>
          <GroupLabel>Modèle</GroupLabel>
        </Group>
        <Group $w={187}>
          <GroupBody $pad={10}>
            <LargeButton $w={60}>
              <IconSlot><ProtectIcon /></IconSlot>
              Protéger
            </LargeButton>
            <LargeButton $w={56}>
              <IconSlot><StylesIcon /></IconSlot>
              Styles
              <ChevronDown size={11} strokeWidth={2} />
            </LargeButton>
            <LargeButton $w={48}>
              <IconSlot><PaneIcon /></IconSlot>
              Volet
            </LargeButton>
          </GroupBody>
          <GroupLabel>Raccourcis Excel</GroupLabel>
        </Group>
        <Group $w={149}>
          <GroupBody $pad={7}>
            <LargeButton $w={80}>
              <IconSlot><SettingsIcon /></IconSlot>
              Paramètres
            </LargeButton>
            <LargeButton $w={52}>
              <IconSlot><HelpCircle>?</HelpCircle></IconSlot>
            </LargeButton>
          </GroupBody>
        </Group>
      </Ribbon>

      <FormulaBar>
        <NameBox>
          G3
          <Caret />
        </NameBox>
        <GripDots>{"·\n·\n·"}</GripDots>
        <FunctionBox>
          <X size={18} strokeWidth={1.8} />
          <Check size={18} strokeWidth={2.4} />
          <FxMark>fx</FxMark>
        </FunctionBox>
        <FormulaInput />
      </FormulaBar>

      <Sheet>
        <Corner />
        {COLUMNS.map(([name]) => (
          <ColHead key={name} $on={name === "G"}>
            {name}
          </ColHead>
        ))}
        {ROWS.map((_, i) => (
          <RowHead key={i} $r={i + 1} $on={i === 2}>
            {i < 19 ? i + 1 : ""}
          </RowHead>
        ))}
        {cells.map(renderCell)}
        {blanks.map(renderCell)}
        <ActiveCell />
      </Sheet>

      <SheetBar>
        <NavArrows>
          <span>◀</span>
          <span>▶</span>
        </NavArrows>
        <SheetTab>Model</SheetTab>
        <AddSheet>
          <Plus size={14} strokeWidth={2} />
        </AddSheet>
        <ScrollGrip>{"·\n·\n·"}</ScrollGrip>
        <ScrollTrack>
          <ScrollArrow />
        </ScrollTrack>
      </SheetBar>

      <Dialog>
        <TitleBar>
          QDV Tools for Excel
          <CloseButton>
            <X size={17} strokeWidth={4} />
          </CloseButton>
        </TitleBar>
        <ClientArea>
          <TabStrip>
            <DialogTab $w={85} $active>Parametres</DialogTab>
            <DialogTab $w={75}>Répartition</DialogTab>
            <DialogTab $w={88}>Organisation</DialogTab>
            <DialogTab $w={66}>Selection</DialogTab>
          </TabStrip>
          <TabBody>
            <ButtonBar>
              <DialogButton $w={79} $h={34}>Sauver</DialogButton>
              <DialogButton $w={80} $h={37} $gap={22}>Options</DialogButton>
              <DialogButton $w={79} $h={34} $push>Exporter</DialogButton>
              <DialogButton $w={79} $h={34} $gap={8}>Importer</DialogButton>
            </ButtonBar>

            <Section $mt={14}>Paramètres de feuille</Section>
            <Fields $mt={3} $gap={1}>
              {TOP_FIELDS.map(([label, value]) => (
                <FieldRow key={label}>
                  <FieldLabel>{label}</FieldLabel>
                  <ArrowButton />
                  <FieldValue>{value}</FieldValue>
                </FieldRow>
              ))}
            </Fields>

            <Section $mt={13}>
              Paramètres généraux
              <MiniButton $left={422}>+</MiniButton>
              <MiniButton $left={451}>-</MiniButton>
            </Section>

            <Section $mt={17}>WBS</Section>
            <Fields $mt={2} $gap={4}>
              {WBS_FIELDS.map(([label, value], i) => (
                <FieldRow key={label}>
                  <FieldLabel>{label}</FieldLabel>
                  <ArrowButton />
                  <FieldValue>{value}</FieldValue>
                  {i === 0 && (
                    <SelectBox>
                      WBS_Item
                      <ChevronDown size={15} strokeWidth={1.3} color="#444" />
                    </SelectBox>
                  )}
                  {i === 1 && (
                    <SelectBox $focus>
                      <span />
                      <ChevronDown size={15} strokeWidth={1.3} color="#444" />
                    </SelectBox>
                  )}
                </FieldRow>
              ))}
            </Fields>

            <Section $mt={3}>Colonnes supplémentaires du WBS</Section>
            <Section $mt={18}>Minutes</Section>
            <Fields $mt={-1} $gap={4}>
              {MINUTE_FIELDS.map((label) => (
                <FieldRow key={label}>
                  <FieldLabel>{label}</FieldLabel>
                  <ArrowButton />
                  <FieldValue />
                </FieldRow>
              ))}
            </Fields>
            <Fields $mt={4} $gap={1}>
              {DECOMPOSE.map((label) => (
                <FieldRow key={label}>
                  <FieldLabel $shaded>{label} column to decompose</FieldLabel>
                  <ArrowButton />
                  <FieldValue />
                </FieldRow>
              ))}
            </Fields>

            <Section $mt={1}>Colonnes supplémentaires de Minutes</Section>
            <Section $mt={14}>Algorithmes</Section>
            <Section $mt={15}>Coefficients</Section>
          </TabBody>
        </ClientArea>
        <Dropdown>
          {WBS_COLUMNS.map((name, i) => (
            <DropItem key={i} $on={name === "WBS_Description"}>
              {name}
            </DropItem>
          ))}
        </Dropdown>
      </Dialog>
    </Page>
  );
};

export default App;
